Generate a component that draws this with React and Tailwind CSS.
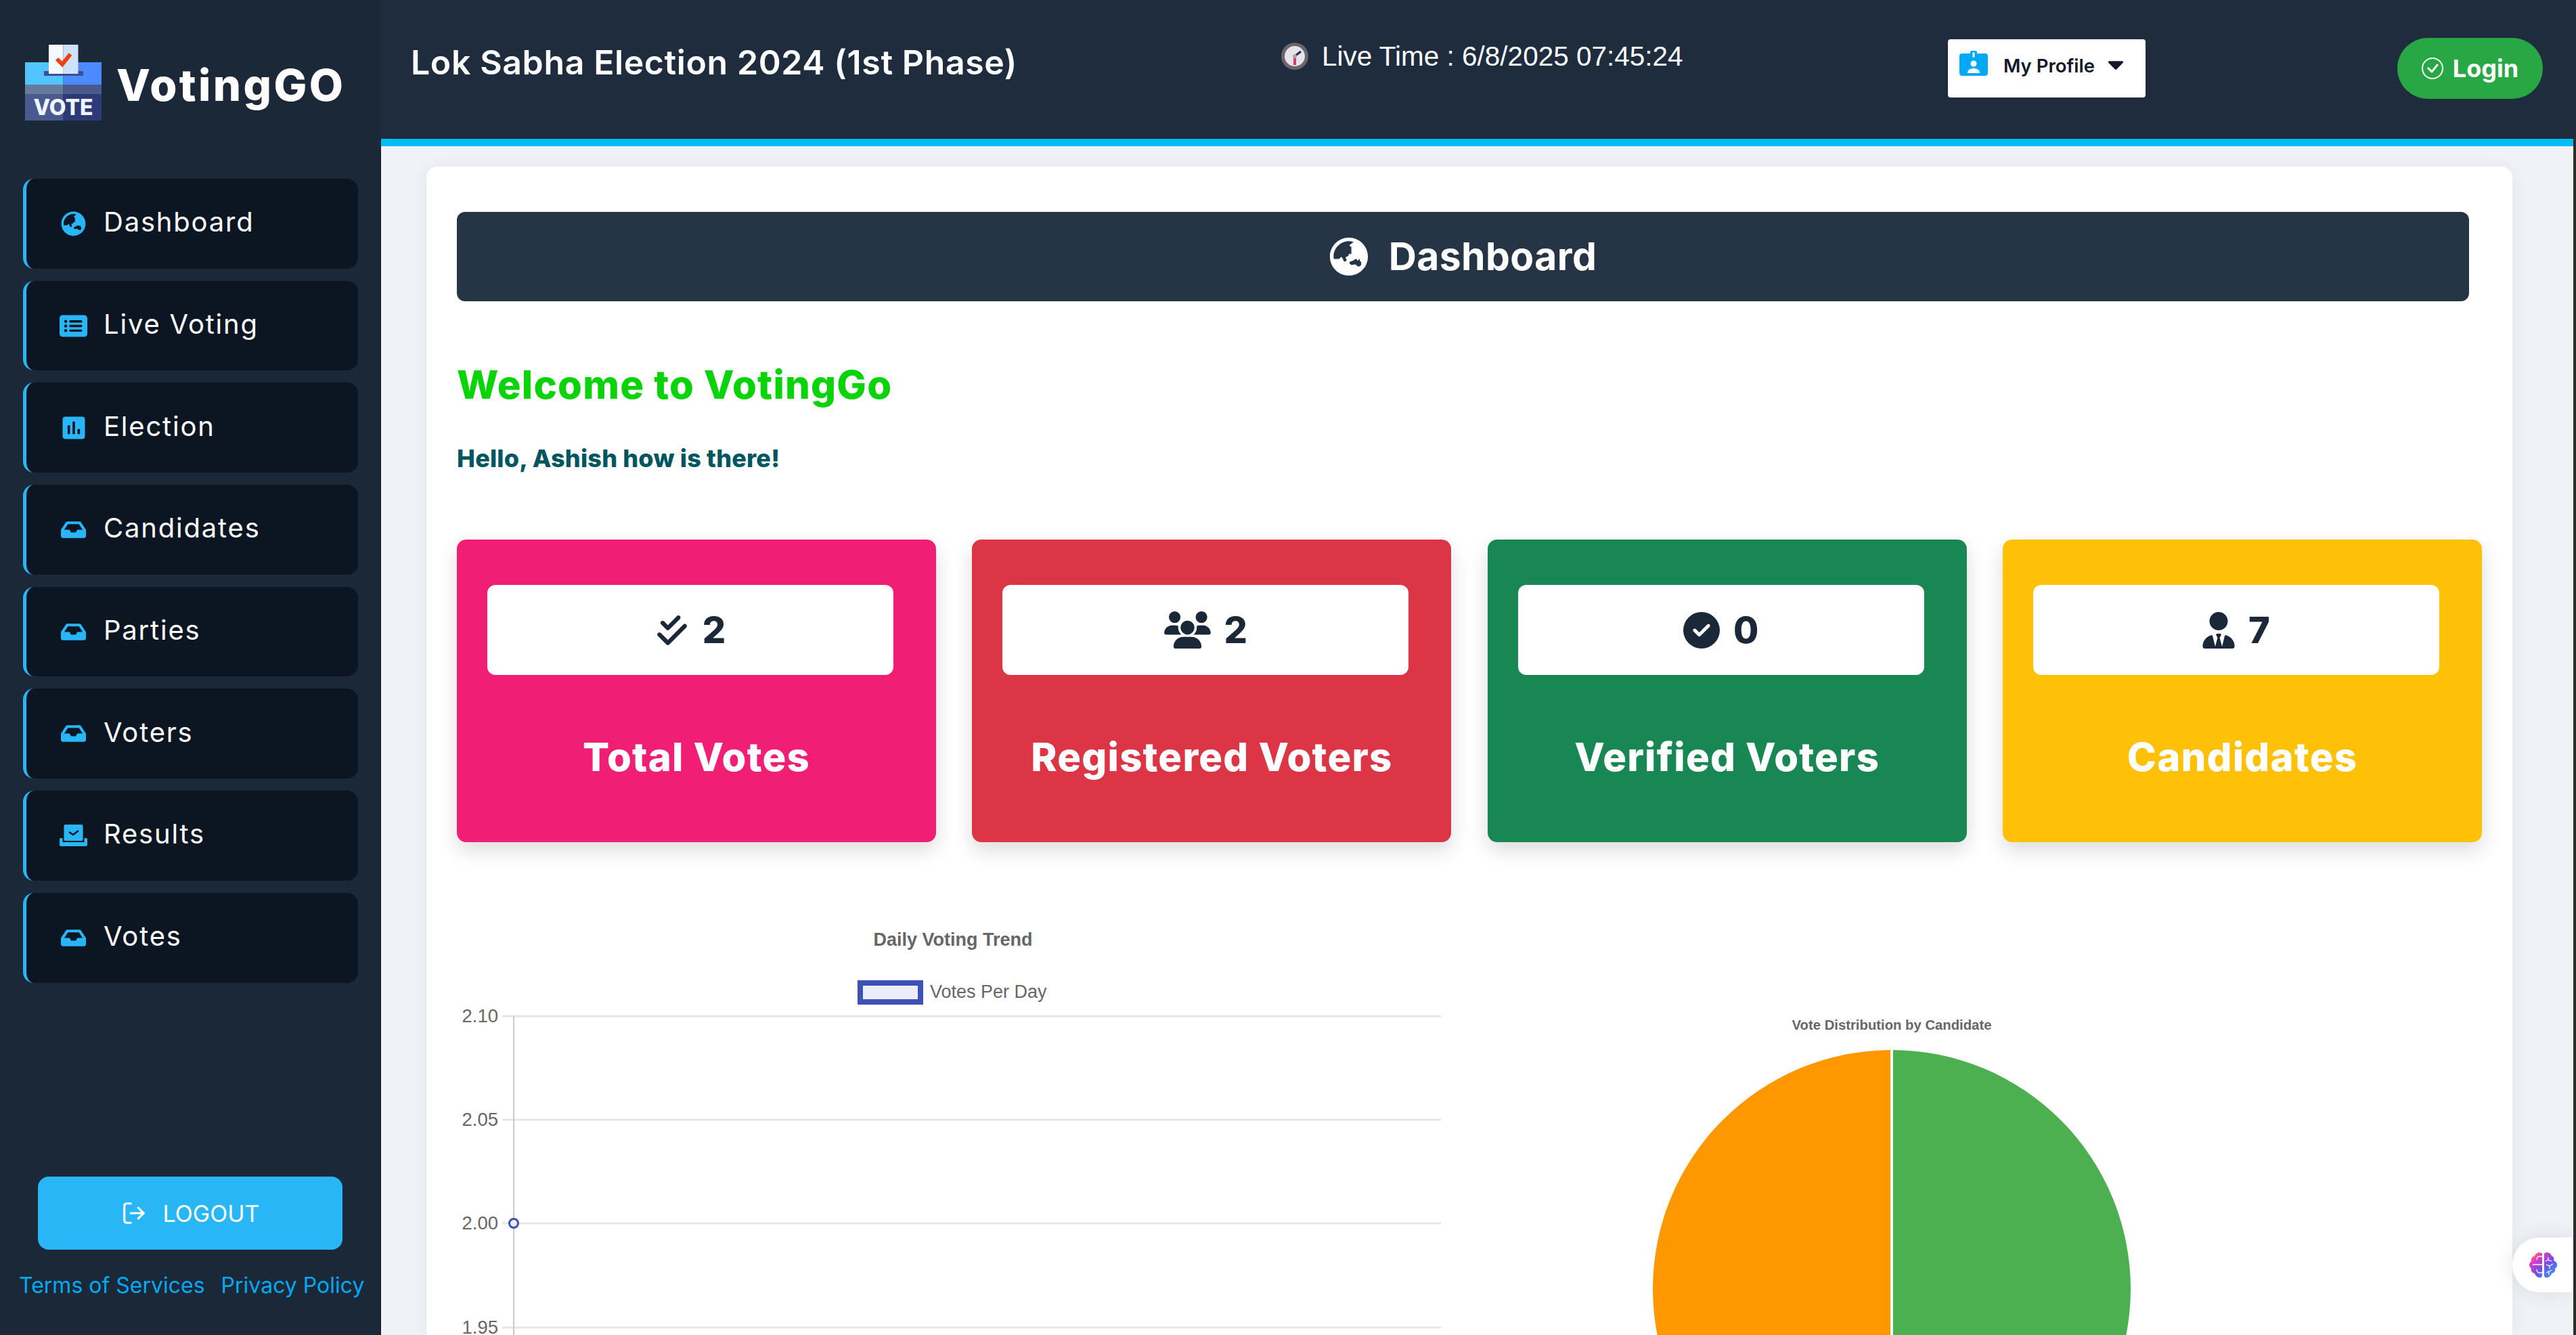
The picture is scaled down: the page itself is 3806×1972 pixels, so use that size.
import { BsCheckCircle } from "react-icons/bs";
import { FaCaretDown, FaGlobeAsia, FaInbox } from "react-icons/fa";
import { FaCheckDouble, FaCircleCheck, FaRectangleList, FaUsers, FaUserTie } from "react-icons/fa6";
import { MdInsertChart } from "react-icons/md";
import { LogOut } from "lucide-react";

const sans = "font-['Inter','Noto_Sans',sans-serif]";

const ResultsIcon = ({ className }) => (
  <svg viewBox="0 0 41 32" className={className} fill="currentColor">
    <rect x="6.5" y="0" width="28" height="24" rx="2" />
    <path d="M0 23a2 2 0 0 1 2-3h2.5v6h32v-6H39a2 2 0 0 1 2 3v7a2 2 0 0 1-2 2H2a2 2 0 0 1-2-2Z" />
    <path d="m14 11 6 4 8-6" fill="none" stroke="#0c1622" strokeWidth="2.4" />
  </svg>
);

const BadgeIcon = () => (
  <svg viewBox="0 0 42 37" className="w-[42px] h-[37px] shrink-0">
    <rect x="0" y="4" width="42" height="33" rx="4" fill="#03a9f4" />
    <rect x="16" y="0" width="10" height="12" rx="2" fill="#03a9f4" />
    <rect x="19.5" y="2.5" width="3" height="7" fill="#fff" />
    <circle cx="21" cy="19" r="4.5" fill="#fff" />
    <path d="M12 33c0-5 4-7 9-7s9 2 9 7Z" fill="#fff" />
  </svg>
);

const navItems = [
  { label: "Dashboard", icon: <FaGlobeAsia className="w-[37px] h-[37px]" /> },
  { label: "Live Voting", icon: <FaRectangleList className="w-[41px] h-[37px]" /> },
  { label: "Election", icon: <MdInsertChart className="w-[44px] h-[44px]" /> },
  { label: "Candidates", icon: <FaInbox className="w-[37px] h-[33px]" /> },
  { label: "Parties", icon: <FaInbox className="w-[37px] h-[33px]" /> },
  { label: "Voters", icon: <FaInbox className="w-[37px] h-[33px]" /> },
  { label: "Results", icon: <ResultsIcon className="w-[41px] h-[32px]" /> },
  { label: "Votes", icon: <FaInbox className="w-[37px] h-[33px]" /> },
];

const stats = [
  { title: "Total Votes", value: 2, bg: "bg-[#f01e74]", icon: <FaCheckDouble className="w-[50px] h-[50px]" /> },
  { title: "Registered Voters", value: 2, bg: "bg-[#dc3545]", icon: <FaUsers className="w-[69px] h-[55px]" /> },
  { title: "Verified Voters", value: 0, bg: "bg-[#198754]", icon: <FaCircleCheck className="w-[54px] h-[54px]" /> },
  { title: "Candidates", value: 7, bg: "bg-[#ffc107]", icon: <FaUserTie className="w-[48px] h-[54px]" /> },
];

const Logo = () => (
  <svg viewBox="0 0 113 112" className="w-[113px] h-[112px] shrink-0">
    <rect x="0" y="26" width="56.5" height="33" fill="#52c4ff" />
    <rect x="56.5" y="26" width="56.5" height="33" fill="#4b8bff" />
    <rect x="0" y="59" width="56.5" height="14" fill="#657a9c" />
    <rect x="56.5" y="59" width="56.5" height="14" fill="#4a5a8c" />
    <rect x="0" y="73" width="56.5" height="39" fill="#4a5a90" />
    <rect x="56.5" y="73" width="56.5" height="39" fill="#2c3b78" />
    <rect x="28" y="39" width="58" height="7" fill="#3c4f8e" />
    <rect x="35" y="0" width="21.5" height="43" fill="#f4faff" />
    <rect x="56.5" y="0" width="22" height="43" fill="#cfe2fb" />
    <path d="m47 21 8 8 12-15" fill="none" stroke="#f0400f" strokeWidth="6" />
    <text x="56.5" y="104" textAnchor="middle" fontFamily="Inter, sans-serif" fontWeight="800" fontSize="32" fill="#eef5ff">VOTE</text>
  </svg>
);

const ClockIcon = () => (
  <svg viewBox="0 0 40 40" className="w-[40px] h-[40px] shrink-0">
    <circle cx="20" cy="20" r="20" fill="#68666c" />
    <circle cx="20" cy="20" r="15" fill="#e6e4e8" />
    <path d="m20 20 9-7" stroke="#2c2450" strokeWidth="3" />
    <path d="M20 20v13" stroke="#e0365f" strokeWidth="4" />
    <circle cx="20" cy="20" r="3" fill="#a9a7ac" />
  </svg>
);

const BrainIcon = () => (
  <svg viewBox="0 0 43 40" className="w-[43px] h-[40px]">
    <defs>
      <linearGradient id="brain" gradientUnits="userSpaceOnUse" x1="8" y1="0" x2="38" y2="36">
        <stop offset="0" stopColor="#ff9a1e" />
        <stop offset="0.2" stopColor="#e83bc0" />
        <stop offset="0.55" stopColor="#7a4be8" />
        <stop offset="1" stopColor="#2a9cff" />
      </linearGradient>
    </defs>
    <path d="M20 3c-1-3-9-3-11 3-4 1-6 5-5 8-4 3-4 8 0 11-1 4 2 7 5 7 1 5 9 9 11 4Z" fill="url(#brain)" />
    <path d="M23 3c1-3 9-3 11 3 3 1 4 4 3 7 6 2 7 9 2 12 1 4-2 7-5 7-1 5-9 9-11 4Z" fill="url(#brain)" />
    <path d="M6 19h14M20 7h-4c-3 0-4 2-4 5M20 31h-4c-3 0-4-2-4-5M29 8v4l-4 2M29 12l5 2M26 19l5 2 5-3M31 21v4M30 29l-4 2M30 29l4-2M30 29v5" fill="none" stroke="#fff" strokeWidth="1.3" />
  </svg>
);

const TrendChart = () => (
  <svg viewBox="0 0 1500 612" className="w-[1500px] h-[612px] shrink-0 -ml-[35px]">
    <text x="768" y="36" textAnchor="middle" fontFamily="Liberation Sans, sans-serif" fontWeight="700" fontSize="27" fill="#666">Daily Voting Trend</text>
    <rect x="631" y="91" width="89" height="28" fill="#ebeef8" stroke="#3f51b5" strokeWidth="8" />
    <text x="734" y="113" fontFamily="Liberation Sans, sans-serif" fontSize="27" fill="#666">Votes Per Day</text>
    {[["2.10", 140], ["2.05", 293], ["2.00", 446], ["1.95", 600]].map(([label, y]) => (
      <g key={label}>
        <line x1="102" x2="1489" y1={y} y2={y} stroke="#e5e5e5" strokeWidth="3" />
        <text x="96" y={y + 9} textAnchor="end" fontFamily="Liberation Sans, sans-serif" fontSize="27.5" fill="#666">{label}</text>
      </g>
    ))}
    <line x1="119" x2="119" y1="140" y2="612" stroke="#c9c9c9" strokeWidth="2" />
    <circle cx="119" cy="446" r="6.5" fill="#ebeef8" stroke="#3f51b5" strokeWidth="3" />
  </svg>
);

const PieChart = () => (
  <svg viewBox="0 0 760 612" className="w-[760px] h-[612px] shrink-0">
    <text x="380" y="160" textAnchor="middle" fontFamily="Liberation Sans, sans-serif" fontWeight="700" fontSize="20.3" fill="#666">Vote Distribution by Candidate</text>
    <path d="M380 190a353 353 0 0 1 0 706Z" fill="#4caf50" />
    <path d="M380 190a353 353 0 0 0 0 706Z" fill="#ff9800" />
    <line x1="380" x2="380" y1="190" y2="896" stroke="#fff" strokeWidth="4" />
  </svg>
);

export default function App() {
  return (
    <div className={`flex h-screen overflow-hidden bg-[#f0f2f7] ${sans}`}>
      <aside className="w-[562px] shrink-0 bg-[#1b2838] flex flex-col">
        <div className="flex items-start gap-[22px] pl-[37px] pt-[66px]">
          <Logo />
          <span className="text-[65px] leading-[112px] font-extrabold text-white tracking-[3.4px] mt-[4px]">VotingGO</span>
        </div>
        <nav className="flex flex-col gap-[18px] pl-[34px] w-[529px] mt-[82px]">
          {navItems.map((item) => (
            <a key={item.label} className="h-[132.7px] flex items-center rounded-[16px] bg-[#0c1622] border-l-[5px] border-[#29b6f6] text-white">
              <span className="w-[114px] pl-[25px] flex justify-center text-[#29b6f6] shrink-0">{item.icon}</span>
              <span className="text-[40px] font-normal tracking-[1.8px] -mt-[4px]">{item.label}</span>
            </a>
          ))}
        </nav>
        <div className="mt-auto">
          <button className="ml-[56px] w-[450px] h-[108px] rounded-[16px] bg-[#29b6f6] text-white flex items-center justify-center gap-[24px] text-[34px] font-normal">
            <LogOut className="w-[38px] h-[38px]" />
            LOGOUT
          </button>
          <div className="flex gap-[24px] pl-[28px] pt-[33px] pb-[53px] text-[32px] leading-[40px] font-normal text-[#03a9f4] whitespace-nowrap">
            <a>Terms of Services</a>
            <a>Privacy Policy</a>
          </div>
        </div>
      </aside>

      <main className="flex-1 min-w-0 flex flex-col relative">
        <header className="h-[205px] shrink-0 bg-[#1e2c3d] flex items-start">
          <h1 className="ml-[45px] mt-[56px] w-[1286px] text-[50px] leading-[72px] font-semibold text-white tracking-[0.6px] whitespace-nowrap">Lok Sabha Election 2024 (1st Phase)</h1>
          <div className="mt-[59px] flex items-center gap-[20px] w-[985px] font-['Liberation_Sans',sans-serif] text-[40.5px] leading-[48px] text-white whitespace-nowrap">
            <ClockIcon />
            <span>Live Time : 6/8/2025 07:45:24</span>
          </div>
          <div className="mt-[58px] w-[292px] h-[86px] bg-white rounded-[4px] flex items-start pt-[17px] pl-[17px] text-[#111827] shrink-0">
            <BadgeIcon />
            <span className="ml-[23px] mt-[1px] text-[27.5px] leading-[42px] font-semibold whitespace-nowrap">My Profile</span>
            <FaCaretDown className="ml-[19px] w-[24px] h-[40px]" />
          </div>
          <button className="ml-[372px] mt-[56px] w-[215px] h-[90px] rounded-full bg-[#28a745] text-white flex items-center justify-center gap-[14px] text-[36px] font-bold shrink-0">
            <BsCheckCircle className="w-[32px] h-[32px]" />
            Login
          </button>
        </header>
        <div className="h-[11px] shrink-0 bg-[#00bdf5] border-l border-r-[4px] border-l-[#10192a] border-r-[#2d2d2d]" />

        <div className="flex-1 min-h-0 pl-[67px] pr-[90px] pt-[30px] border-l border-r-[4px] border-l-[#10192a] border-r-[#2d2d2d]">
          <section className="h-full bg-white rounded-t-[16px] shadow-[0_0_24px_rgba(0,0,0,0.06)] pt-[67px] pl-[45px] pr-[45px] overflow-hidden">
            <div className="w-[2973px] h-[132px] rounded-[12px] bg-[#263545] text-white flex items-center justify-center gap-[30px] text-[57px] tracking-[0.4px] font-bold">
              <FaGlobeAsia className="w-[58px] h-[58px]" />
              Dashboard
            </div>
            <h2 className="mt-[83px] text-[58px] leading-[80px] font-extrabold tracking-[1.2px] text-[#0ad30a]">Welcome to VotingGo</h2>
            <p className="mt-[44px] text-[36px] leading-[50px] font-extrabold tracking-[0.2px] text-[#00565f]">Hello, Ashish how is there!</p>
            <div className="mt-[95px] grid grid-cols-4 gap-[53.3px] w-[2992px]">
              {stats.map((s) => (
                <div key={s.title} className={`${s.bg} h-[447px] rounded-[14px] shadow-[0_12px_30px_rgba(0,0,0,0.14)] pt-[67px] pl-[45px] pr-[63px]`}>
                  <div className="h-[133px] rounded-[12px] bg-white flex items-center justify-center gap-[20px] text-[#1b2838] text-[54px] font-extrabold">
                    {s.icon}
                    <span>{s.value}</span>
                  </div>
                  <h3 className="-ml-[45px] -mr-[63px] mt-[81px] text-center text-[58px] leading-[80px] font-extrabold tracking-[1.2px] text-white">{s.title}</h3>
                </div>
              ))}
            </div>
            <div className="mt-[117px] flex">
              <TrendChart />
              <div className="ml-[275px]"><PieChart /></div>
            </div>
          </section>
        </div>

        <div className="absolute right-[4px] top-[1828px] w-[90px] h-[81px] bg-white rounded-l-[40px] shadow-[0_0_30px_rgba(0,0,0,0.1)] flex items-center pl-[24px]">
          <BrainIcon />
        </div>
      </main>
    </div>
  );
}
